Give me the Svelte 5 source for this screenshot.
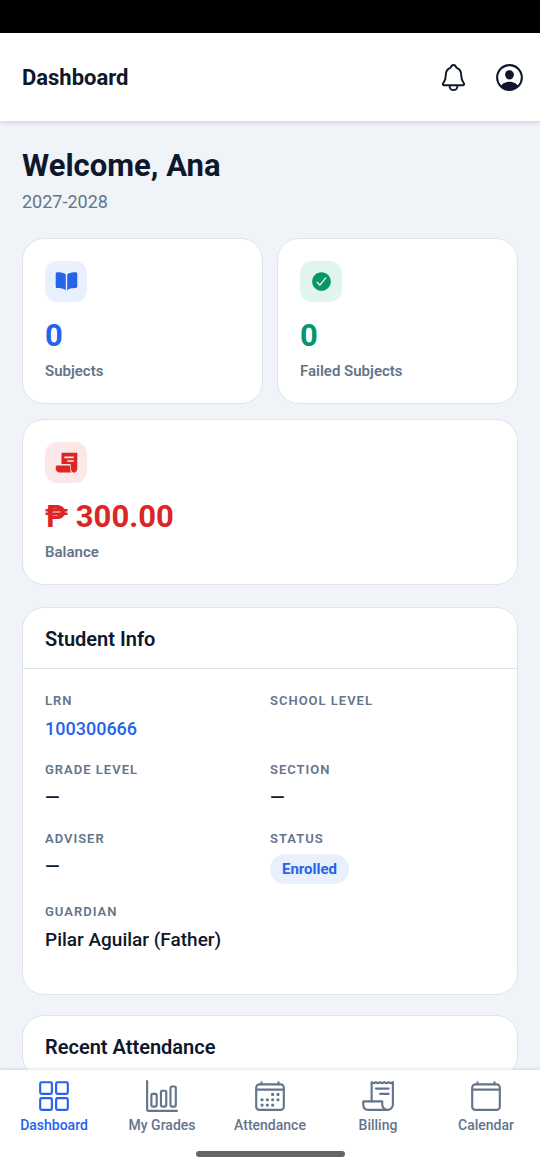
<script>
  const stats = [
    { icon: "book", tone: "blue", value: "0", label: "Subjects" },
    { icon: "check", tone: "green", value: "0", label: "Failed Subjects" },
    { icon: "receipt", tone: "red", value: "₱ 300.00", label: "Balance", wide: true },
  ];

  const info = [
    { label: "LRN", value: "100300666", link: true },
    { label: "School Level", value: "" },
    { label: "Grade Level", value: "—" },
    { label: "Section", value: "—" },
    { label: "Adviser", value: "—" },
    { label: "Status", value: "Enrolled", badge: true },
    { label: "Guardian", value: "Pilar Aguilar (Father)", wide: true },
  ];

  const tabs = [
    { id: "dashboard", label: "Dashboard" },
    { id: "grades", label: "My Grades" },
    { id: "attendance", label: "Attendance" },
    { id: "billing", label: "Billing" },
    { id: "calendar", label: "Calendar" },
  ];

  let activeTab = $state("dashboard");
</script>

<div class="screen">
  <div class="status-bar"></div>

  <header>
    <h1>Dashboard</h1>
    <div class="actions">
      <button type="button" aria-label="Notifications">
        <svg class="outline bell" viewBox="0 0 512 512">
          <path d="M427.68 351.43C402 320 383.87 304 383.87 217.35 383.87 138 343.35 109.73 310 96c-4.43-1.82-8.6-6-9.95-10.55C294.2 65.54 277.8 48 256 48s-38.21 17.55-44 37.47c-1.35 4.6-5.52 8.71-9.95 10.53-33.39 13.75-73.87 41.92-73.87 121.35C128.13 304 110 320 84.32 351.43 73.68 364.45 83 384 101.61 384h308.88c18.51 0 27.77-19.61 17.19-32.57zM320 384v16a64 64 0 01-128 0v-16" />
        </svg>
      </button>
      <button type="button" aria-label="Profile">
        <svg class="solid" viewBox="0 0 512 512">
          <path d="M258.9 48C141.92 46.42 46.42 141.92 48 258.9c1.56 112.19 92.91 203.54 205.1 205.1 117 1.6 212.48-93.9 210.88-210.88C462.44 140.91 371.09 49.56 258.9 48zm126.42 327.25a4 4 0 01-6.14-.32 124.27 124.27 0 00-32.35-29.59C321.37 329 289.11 320 256 320s-65.37 9-90.83 25.34a124.24 124.24 0 00-32.35 29.58 4 4 0 01-6.14.32A175.32 175.32 0 0180 259c-1.63-97.31 78.22-178.76 175.57-179S432 158.81 432 256a175.32 175.32 0 01-46.68 119.25z" />
          <path d="M256 144c-19.72 0-37.55 7.39-50.22 20.82s-19 32-17.57 51.93C191.11 256 221.52 288 256 288s64.83-32 67.79-71.24c1.48-19.74-4.8-38.14-17.68-51.82C293.39 151.44 275.59 144 256 144z" />
        </svg>
      </button>
    </div>
  </header>

  <main>
    <section class="welcome">
      <h2>Welcome, Ana</h2>
      <p>2027-2028</p>
    </section>

    <section class="stats">
      {#each stats as stat}
        <div class="card stat {stat.tone}" class:wide={stat.wide}>
          <div class="stat-icon">
            <svg class="solid" viewBox="0 0 512 512">
              {#if stat.icon === "book"}
                <path d="M202.24 74C166.11 56.75 115.61 48.3 48 48a31.36 31.36 0 00-17.92 5.33A32 32 0 0016 79.9V366c0 19.34 13.76 33.93 32 33.93 71.07 0 142.36 6.64 185.06 47a4.11 4.11 0 006.94-3V106.82a15.89 15.89 0 00-5.46-12A143 143 0 00202.24 74zM481.92 53.3A31.33 31.33 0 00464 48c-67.61.3-118.11 8.71-154.24 26a143.31 143.31 0 00-32.31 20.78 15.93 15.93 0 00-5.45 12v337.13a3.93 3.93 0 006.68 2.81c25.67-25.5 70.72-46.82 185.36-46.81a32 32 0 0032-32v-288a32 32 0 00-14.12-26.61z" />
              {:else if stat.icon === "check"}
                <path d="M256 48C141.31 48 48 141.31 48 256s93.31 208 208 208 208-93.31 208-208S370.69 48 256 48zm108.25 138.29l-134.4 160a16 16 0 01-12 5.71h-.27a16 16 0 01-11.89-5.3l-57.6-64a16 16 0 1123.78-21.4l45.29 50.32 122.59-145.91a16 16 0 0124.5 20.58z" />
              {:else}
                <path fill-rule="evenodd" d="M144 32l24 13 24-13 24 13 24-13 24 13 24-13 24 13 24-13 24 13 24-13 24 13 24-13 24 13 24-13 16 10v344c0 53-26 96-70 96s-74-43-74-96v-64c0-18-12-32-30-32H144zM208 124v36h208v-36zM272 204v36h144v-36z" />
                <path d="M336 336a16 16 0 00-16-16H48c-18 0-32 14-32 32 0 76 16 128 96 128h256c-20-18-32-50-32-96z" />
              {/if}
            </svg>
          </div>
          <strong>{stat.value}</strong>
          <span>{stat.label}</span>
        </div>
      {/each}
    </section>

    <section class="card panel">
      <h3>Student Info</h3>
      <dl>
        {#each info as item}
          <div class:wide={item.wide}>
            <dt>{item.label}</dt>
            <dd class:link={item.link}>
              {#if item.badge}
                <span class="badge">{item.value}</span>
              {:else}
                {item.value}
              {/if}
            </dd>
          </div>
        {/each}
      </dl>
    </section>

    <section class="card panel">
      <h3>Recent Attendance</h3>
    </section>
  </main>

  <nav>
    <div class="tabs">
      {#each tabs as tab}
        <button type="button" class:active={activeTab === tab.id} onclick={() => (activeTab = tab.id)}>
          <svg class="outline" viewBox="0 0 512 512">
            {#if tab.id === "dashboard"}
              <rect x="48" y="48" width="176" height="176" rx="20" />
              <rect x="288" y="48" width="176" height="176" rx="20" />
              <rect x="48" y="288" width="176" height="176" rx="20" />
              <rect x="288" y="288" width="176" height="176" rx="20" />
            {:else if tab.id === "grades"}
              <path d="M32 32v432a16 16 0 0016 16h432" />
              <rect x="96" y="224" width="80" height="192" rx="20" />
              <rect x="240" y="176" width="80" height="240" rx="20" />
              <rect x="384" y="112" width="80" height="304" rx="20" />
            {:else if tab.id === "billing"}
              <path d="M160 336V48l32 16 32-16 31.94 16 32.37-16L320 64l31.79-16 31.93 16L416 48l32.01 16L480 48v224" />
              <path d="M480 272v112a80 80 0 01-80 80 80 80 0 01-80-80v-48H48a15.86 15.86 0 00-16 16c0 64 6.74 112 80 112h288M224 144h192M288 224h128" />
            {:else}
              <rect x="48" y="80" width="416" height="384" rx="48" />
              <path d="M128 48v32M384 48v32M464 160H48" />
              {#if tab.id === "attendance"}
                <g class="dots">
                  <circle cx="296" cy="232" r="24" />
                  <circle cx="376" cy="232" r="24" />
                  <circle cx="136" cy="312" r="24" />
                  <circle cx="216" cy="312" r="24" />
                  <circle cx="296" cy="312" r="24" />
                  <circle cx="376" cy="312" r="24" />
                  <circle cx="136" cy="392" r="24" />
                  <circle cx="216" cy="392" r="24" />
                  <circle cx="296" cy="392" r="24" />
                </g>
              {/if}
            {/if}
          </svg>
          <span>{tab.label}</span>
        </button>
      {/each}
    </div>
    <div class="home-bar"></div>
  </nav>
</div>

<style>
  :global(body) {
    margin: 0;
  }

  .screen {
    display: flex;
    flex-direction: column;
    height: 100vh;
    background: #f0f4f9;
    color: #0f172a;
    font-family: Roboto, "Noto Sans", sans-serif;
  }

  .screen * {
    box-sizing: border-box;
  }

  h1, h2, h3, p, dl, dd {
    margin: 0;
  }

  button {
    padding: 0;
    border: none;
    background: none;
    color: inherit;
    font: inherit;
    cursor: pointer;
  }

  svg {
    display: block;
  }

  .outline {
    fill: none;
    stroke: currentColor;
    stroke-width: 32;
    stroke-linecap: round;
    stroke-linejoin: round;
  }

  .solid,
  .dots {
    fill: currentColor;
    stroke: none;
  }

  .status-bar {
    flex: none;
    height: 33px;
    background: #000;
  }

  header {
    display: flex;
    flex: none;
    align-items: center;
    justify-content: space-between;
    height: 88px;
    padding: 0 14px 0 22px;
    background: #fff;
    box-shadow: 0 1px 5px rgba(15, 23, 42, 0.18);
    z-index: 1;
  }

  h1 {
    padding-top: 2px;
    font-size: 22px;
    font-weight: 700;
    line-height: 28px;
  }

  .actions {
    display: flex;
    align-items: center;
    gap: 24px;
  }

  .actions svg {
    width: 33px;
    height: 33px;
  }

  .actions .bell {
    width: 31px;
    height: 31px;
  }

  main {
    flex: 1;
    min-height: 0;
    padding: 23px 22px;
    overflow-y: auto;
    scrollbar-width: none;
  }

  .welcome {
    margin-bottom: 22px;
  }

  h2 {
    font-size: 31px;
    font-weight: 700;
    line-height: 44px;
  }

  .welcome p {
    color: #64748b;
    font-size: 18px;
    line-height: 28px;
  }

  .card {
    background: #fff;
    border: 1px solid #e0e3e8;
    border-radius: 22px;
  }

  .stats {
    display: grid;
    grid-template-columns: 1fr 1fr;
    gap: 15px 14px;
    margin-bottom: 22px;
  }

  .stat {
    display: flex;
    flex-direction: column;
    padding: 22px;
  }

  .wide {
    grid-column: 1 / -1;
  }

  .stat-icon {
    display: grid;
    place-items: center;
    width: 42px;
    height: 41px;
    margin-bottom: 13px;
    border-radius: 12px;
  }

  .stat-icon svg {
    width: 23px;
    height: 23px;
  }

  .stat strong {
    font-size: 31px;
    font-weight: 700;
    line-height: 42px;
  }

  .stat span {
    margin-top: 4px;
    color: #64748b;
    font-size: 15px;
    font-weight: 600;
    line-height: 20px;
  }

  .blue {
    color: #2563eb;
  }

  .blue .stat-icon {
    background: #e8effd;
  }

  .green {
    color: #059669;
  }

  .green .stat-icon {
    background: #e1f5ee;
  }

  .red {
    color: #dc2626;
  }

  .red .stat-icon {
    background: #fce8e8;
  }

  .panel {
    margin-bottom: 20px;
  }

  h3 {
    padding: 18px 22px 16px;
    border-bottom: 1px solid #e0e3e8;
    font-size: 20px;
    font-weight: 600;
    line-height: 26px;
  }

  dl {
    display: grid;
    grid-template-columns: 1fr 1fr;
    row-gap: 19px;
    padding: 23px 22px 41px;
  }

  dt {
    margin-bottom: 6px;
    color: #64748b;
    font-size: 13px;
    font-weight: 600;
    letter-spacing: 1px;
    line-height: 18px;
    text-transform: uppercase;
  }

  dd {
    min-height: 26px;
    font-size: 19px;
    font-weight: 500;
    line-height: 26px;
  }

  .link {
    color: #2563eb;
    font-size: 18px;
  }

  .badge {
    display: inline-block;
    padding: 0 12px;
    border-radius: 15px;
    background: #e8effd;
    color: #2563eb;
    font-size: 15px;
    font-weight: 700;
    line-height: 30px;
    vertical-align: top;
  }

  nav {
    flex: none;
    padding: 9px 0 13px;
    background: #fff;
    box-shadow: 0 -1px 3px rgba(15, 23, 42, 0.12);
    z-index: 1;
  }

  .tabs {
    display: flex;
  }

  .tabs button {
    display: flex;
    flex: 1;
    flex-direction: column;
    align-items: center;
    gap: 3px;
    color: #64748b;
    font-size: 14px;
    font-weight: 500;
    line-height: 18px;
  }

  .tabs svg {
    width: 34px;
    height: 34px;
  }

  .tabs .active {
    color: #2563eb;
  }

  .home-bar {
    width: 149px;
    height: 6px;
    margin: 17px auto 0;
    border-radius: 3px;
    background: #666;
  }
</style>
